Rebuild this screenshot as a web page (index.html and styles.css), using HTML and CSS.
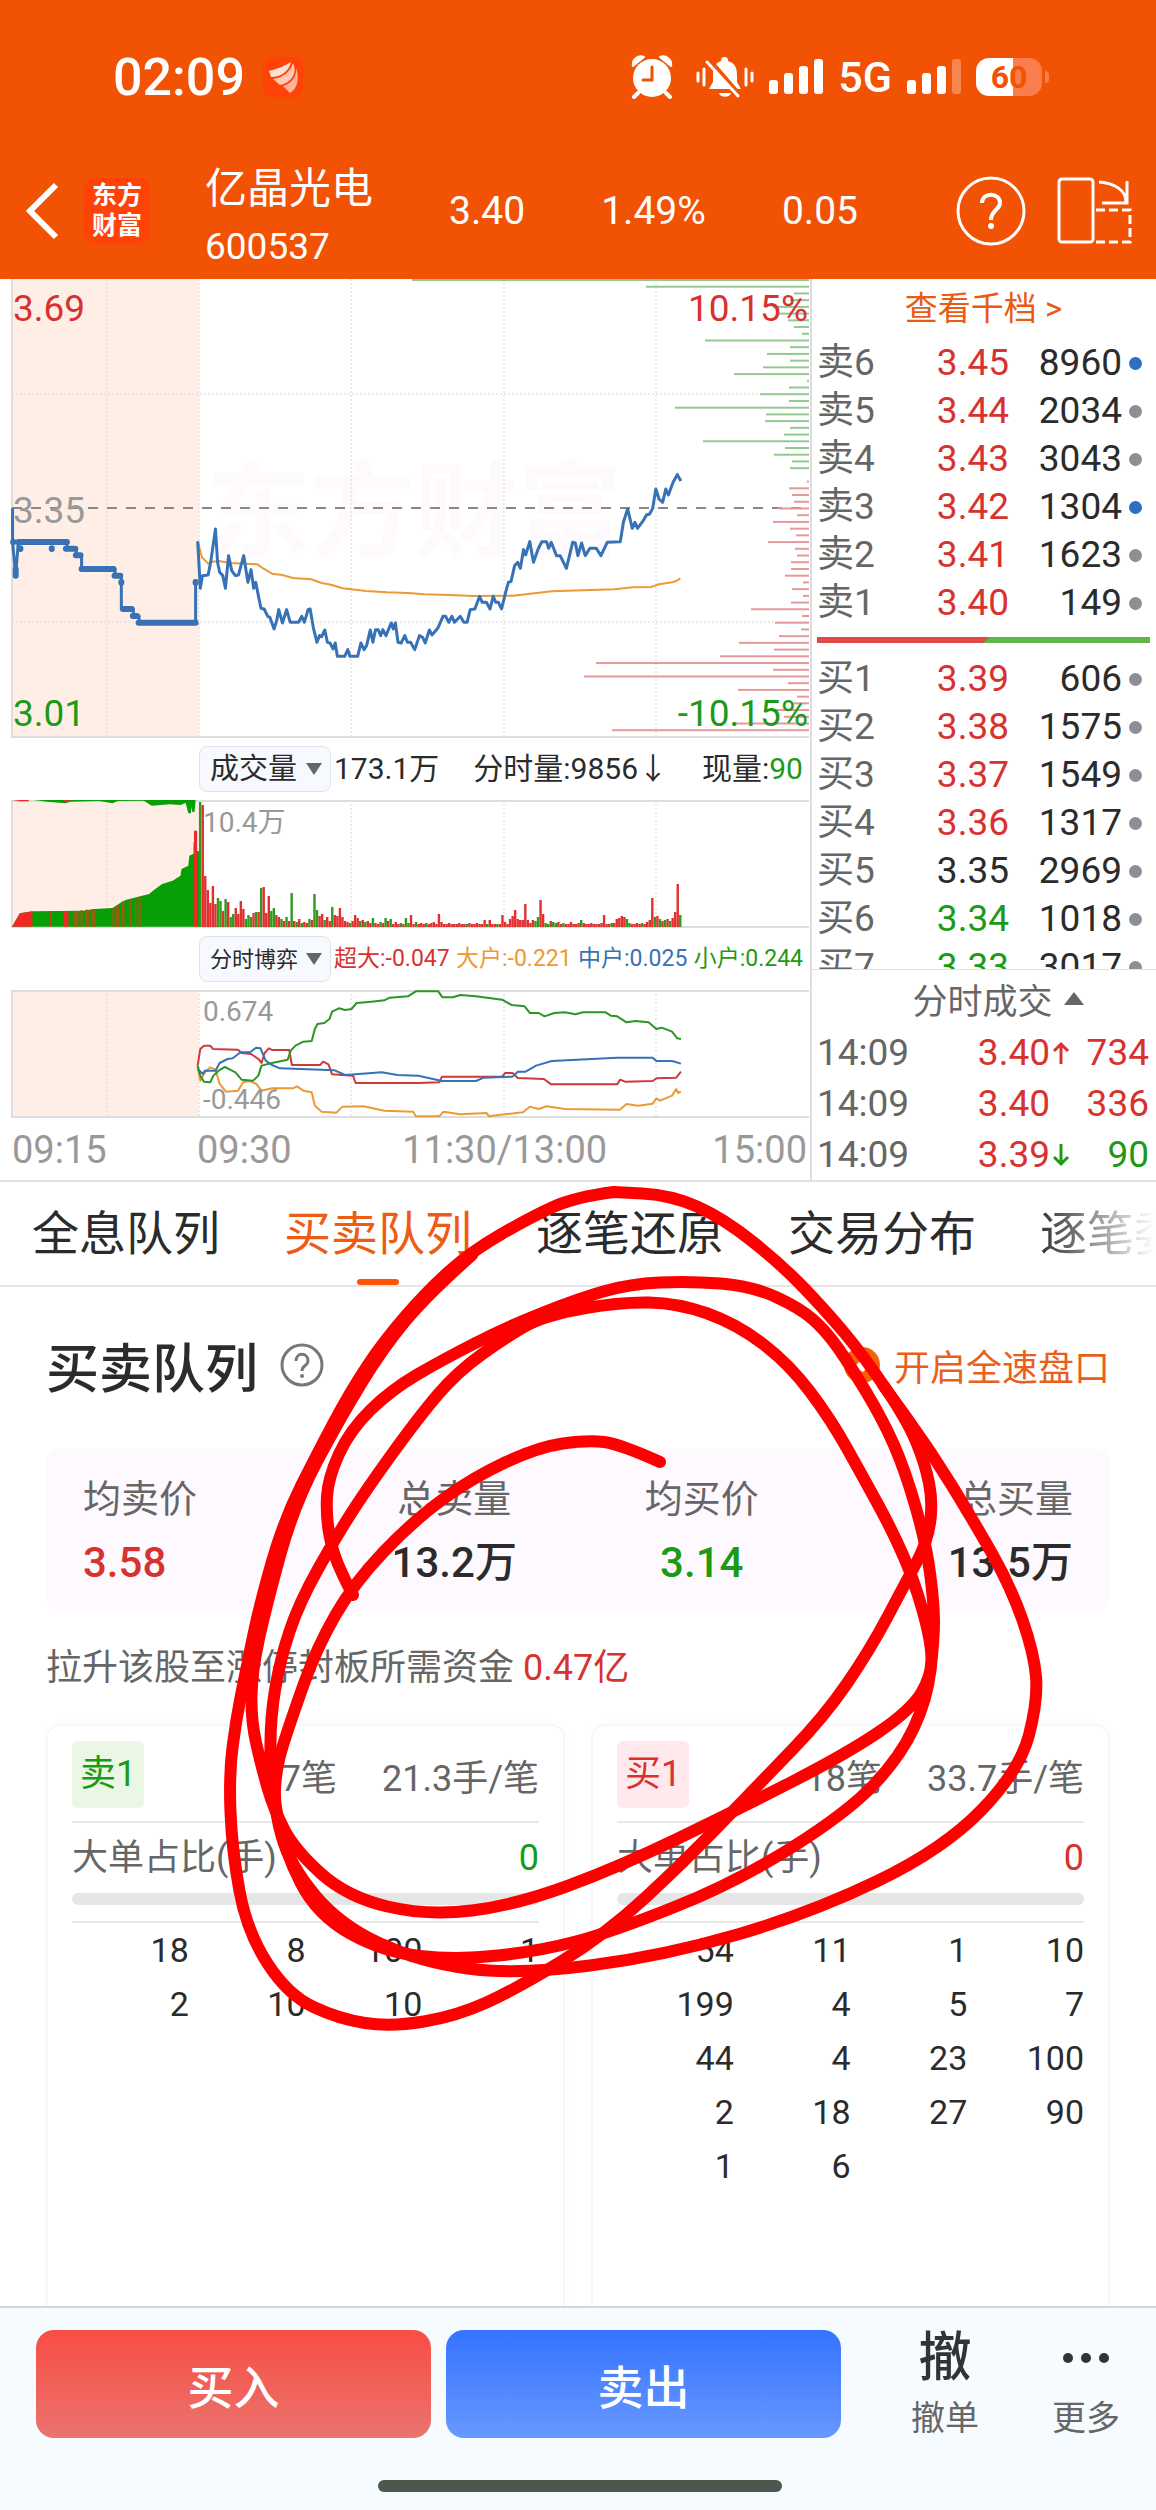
FILE: index.html
```html
<!DOCTYPE html>
<html lang="zh-CN">
<head>
    <meta charset="UTF-8">
    <meta name="viewport" content="width=device-width, initial-scale=1.0">
    <title>亿晶光电 600537</title>
    <link rel="stylesheet" href="styles.css">
</head>
<body>
    <div class="app">
        <header class="header">
            <div class="status">
                <span class="clock">02:09</span>
                <svg class="app-icon" width="40" height="40" viewBox="0 0 40 40">
                    <rect width="40" height="40" rx="9" fill="#ff4208"/>
                    <path d="M6 14C14 12 22 9 28 5C26 14 18 20 8 20Z" fill="#ffe0d2"/>
                    <path d="M10 22C20 21 28 14 30 6C35 16 28 26 17 28Z" fill="#ffc9b4"/>
                    <path d="M20 29C30 26 34 18 33 11C37 22 34 32 27 36Z" fill="#ffb39a"/>
                </svg>
                <div class="status-icons">
                    <svg width="42" height="44" viewBox="0 0 42 44">
                        <circle cx="21" cy="23" r="19" fill="#fff"/>
                        <path d="M2 11A8 8 0 0 1 13 2ZM40 11A8 8 0 0 0 29 2Z" fill="#fff" stroke="#fff" stroke-width="2" stroke-linejoin="round"/>
                        <path d="M7 38L3 42M35 38L39 42" stroke="#fff" stroke-width="4" stroke-linecap="round"/>
                        <path d="M21 12V25H12" fill="none" stroke="#f25204" stroke-width="3" stroke-linecap="round"/>
                    </svg>
                    <svg class="bell" width="58" height="44" viewBox="0 0 58 44">
                        <path d="M28 2C31 2 32 3 32 6C39 8 41 13 41 20V27L45 34H13L17 27V20C17 13 19 8 25 6C25 3 26 2 28 2Z" fill="#fff"/>
                        <path d="M23 38H35C34 43 24 43 23 38Z" fill="#fff"/>
                        <path d="M14 6L45 42" stroke="#f25204" stroke-width="5"/>
                        <path d="M11 7L42 41" stroke="#fff" stroke-width="3" stroke-linecap="round"/>
                        <path d="M2 18V26M8 14V30M50 14V30M56 18V26" stroke="#fff" stroke-width="3" stroke-linecap="round"/>
                    </svg>
                    <svg width="54" height="38" viewBox="0 0 54 38" fill="#fff">
                        <rect y="22" width="9" height="14" rx="3"/>
                        <rect x="15" y="15" width="9" height="21" rx="3"/>
                        <rect x="30" y="8" width="9" height="28" rx="3"/>
                        <rect x="45" y="1" width="9" height="35" rx="3"/>
                    </svg>
                    <span class="network">5G</span>
                    <svg width="54" height="38" viewBox="0 0 54 38" fill="#fff">
                        <rect y="22" width="9" height="14" rx="3"/>
                        <rect x="15" y="15" width="9" height="21" rx="3"/>
                        <rect x="30" y="8" width="9" height="28" rx="3"/>
                        <rect x="45" y="1" width="9" height="35" rx="3" opacity=".3"/>
                    </svg>
                    <span class="battery">60</span>
                </div>
            </div>
            <div class="stock">
                <button class="icon-button" aria-label="返回">
                    <svg width="36" height="60" viewBox="0 0 36 60"><path d="M32 4L6 30L32 56" fill="none" stroke="#fff" stroke-width="6"/></svg>
                </button>
                <span class="logo">东方<br>财富</span>
                <div class="stock-name">
                    <h1>亿晶光电</h1>
                    <span>600537</span>
                </div>
                <div class="quote">
                    <span>3.40</span>
                    <span>1.49%</span>
                    <span>0.05</span>
                </div>
                <button class="icon-button" aria-label="帮助">
                    <svg width="70" height="70" viewBox="0 0 70 70" fill="none" stroke="#fff" stroke-width="3">
                        <circle cx="35" cy="35" r="33"/>
                        <path d="M26 27C26 16 44 16 44 27C44 34 35 34 35 44" stroke-width="4"/>
                        <circle cx="35" cy="50" r="3" fill="#fff" stroke="none"/>
                    </svg>
                </button>
                <button class="icon-button" aria-label="横屏">
                    <svg width="76" height="70" viewBox="0 0 76 70" fill="none" stroke="#fff" stroke-width="3">
                        <rect x="3" y="3" width="34" height="63" rx="3"/>
                        <path d="M43 6C58 7 70 14 70 26M46 27H71V5"/>
                        <path d="M40 34H74V66H40" stroke-dasharray="9 4"/>
                    </svg>
                </button>
            </div>
        </header>

        <main>
            <section class="market">
                <div class="charts">
                    <svg class="chart" viewBox="0 0 810 459">
                        <rect x="12" y="0" width="187" height="458" fill="#ffeee6"/>
                        <text class="watermark" x="206" y="270">东方财富</text>
                        <path class="grid" d="M107 0V458M199 0V458M351 0V458M504 0V458M656 0V458M12 115H809M12 343H809"/>
                        <path class="frame" d="M12 0V458H809"/>
                        <path class="middle" d="M12 229H809"/>
                        <g id="profile"></g>
                        <g class="plot" transform="translate(0 -10) scale(.523 .3333)">
                            <path class="orange" d="M378 817L386 865 398 884 407 878 418 876 440 882 492 886 505 900 520 914 540 918 560 927 595 931 615 942 635 948 655 958 700 966 740 970 780 972 810 976 860 978 905 981 980 980 1010 975 1055 967 1130 963 1175 961 1210 955 1245 954 1260 946 1285 940 1293 936 1301 928"/>
                            <path class="blue" d="M24 718V819L30 920 35 819H128L128 839H146V859H156V900H220V920H232V1020H255V1041H266V1061H374V940"/>
                            <path class="auction" d="M25 819H26M30 900V920M35 819H128M39 838V840M99 838V840M126 839H144M145 859H154M156 900H217M219 920H230M232 939V941M235 1020H252M254 1041H262M265 1061H374M374 939V941"/>
                            <path class="blue" d="M378 817L383 958 387 920 398 918 403 878 412 780 416 880 420 910 426 920 431 958 437 860 443 905 450 920 456 918 466 860 470 900 474 940 480 902 485 958 489 940 494 980 499 1018 505 1020 512 1042 516 1045 524 1080 529 1055 533 1022 540 1062 548 1022 555 1060 571 1060 577 1042 582 1060 589 1022 593 1020 599 1075 606 1120 611 1100 615 1103 621 1083 626 1120 631 1122 637 1140 641 1122 645 1162 659 1162 665 1142 669 1162 684 1162 690 1122 696 1142 701 1130 708 1083 713 1120 718 1082 723 1082 728 1100 732 1082 738 1100 748 1062 752 1080 756 1062 761 1120 767 1122 774 1100 779 1120 785 1120 793 1142 802 1100 808 1105 813 1122 821 1083 826 1098 837 1078 847 1042 852 1042 858 1060 864 1042 869 1060 880 1042 887 1060 893 1060 899 1022 908 1020 917 982 922 1000 930 1000 937 1020 943 982 948 1000 953 1000 959 1020 966 975 972 940 977 938 984 890 990 880 995 898 1001 842 1005 858 1013 818 1020 880 1029 840 1036 818 1045 818 1049 838 1054 820 1064 860 1071 860 1083 898 1095 820 1100 822 1105 860 1112 822 1119 860 1128 838 1140 838 1149 860 1161 820 1186 818 1192 760 1200 720 1209 778 1214 760 1219 778 1230 755 1236 738 1242 735 1248 718 1254 660 1260 690 1267 700 1273 660 1278 678 1287 640 1295 617 1302 636"/>
                        </g>
                        <text class="axis up" x="13" y="42">3.69</text>
                        <text class="axis up end" x="808" y="42">10.15%</text>
                        <text class="axis muted" x="13" y="244">3.35</text>
                        <text class="axis down" x="13" y="447">3.01</text>
                        <text class="axis down end" x="808" y="447">-10.15%</text>
                    </svg>

                    <div class="indicator">
                        <label class="picker">
                            <select class="picker-select" aria-label="副图指标一">
                                <option>成交量</option>
                            </select>
                        </label>
                        <div class="volume-values">
                            <span>173.1万</span>
                            <span>分时量:9856↓</span>
                            <span>现量:<b class="down">90</b></span>
                        </div>
                    </div>

                    <svg class="chart" viewBox="0 0 810 128">
                        <rect x="12" y="0" width="187" height="127" fill="#ffeee6"/>
                        <path class="grid" d="M107 0V127M199 0V127M351 0V127M504 0V127M656 0V127"/>
                        <path class="frame" d="M809 1H12V127H809"/>
                        <g transform="translate(0 -71) scale(.523 .3333)">
                            <path fill="#06a006" d="M23 593L38 553 62 547 160 545 180 540 215 537 232 520 240 513 285 495 295 482 310 465 330 455 345 440 347 420 360 410 362 380 370 374 370 340 375 340 375 366 383 366V593ZM65 213L90 218 125 223 135 218 190 216 215 223 225 216 275 215 290 230 325 226 345 228 355 222 360 253 365 253 366 235 368 250 372 248 374 213Z"/>
                            <path fill="#f02828" d="M23 593L38 553 62 547V593ZM96 547H99V593H96ZM122 546H131V593H122ZM371 305H377V593H371ZM23 213H55V217H40ZM122 213H133V218H124Z"/>
                            <path fill="#a05a10" d="M140 546H150V593H140ZM154 544H158V593H154ZM163 542H170V593H163ZM174 541H183V593H174ZM215 537H219V593H215ZM222 532H228V593H222ZM232 518H238V593H232ZM247 510H251V593H247ZM258 506H261V593H258ZM265 503H269V593H265Z"/>
                        </g>
                        <g id="volume"></g>
                        <text class="axis-small" x="203" y="32">10.4万</text>
                    </svg>

                    <div class="indicator">
                        <label class="picker">
                            <select class="picker-select picker-small" aria-label="副图指标二">
                                <option>分时博弈</option>
                            </select>
                        </label>
                        <div class="game-values">
                            <span class="up">超大:-0.047</span>
                            <span class="large">大户:-0.221</span>
                            <span class="medium">中户:0.025</span>
                            <span class="down">小户:0.244</span>
                        </div>
                    </div>

                    <svg class="chart" viewBox="0 0 810 128">
                        <rect x="12" y="0" width="187" height="127" fill="#ffeee6"/>
                        <path class="grid" d="M107 0V127M199 0V127M351 0V127M504 0V127M656 0V127"/>
                        <path class="frame" d="M809 1H12V127H809"/>
                        <text class="axis-small" x="203" y="31">0.674</text>
                        <g class="plot thin" transform="translate(0 -61) scale(.523 .3333)">
                            <path class="orange" d="M378 415L383 455 392 430 402 415 412 422 420 465 432 488 455 485 465 460 478 456 490 465 500 485 520 478 560 478 568 472 580 485 596 490 602 530 615 548 643 551 655 533 695 532 735 545 790 548 795 562 840 562 848 548 880 556 930 552 935 562 965 556 1000 550 1013 533 1030 540 1045 532 1080 540 1185 542 1198 525 1220 530 1248 524 1255 508 1262 515 1285 500 1293 480 1297 492 1302 488"/>
                            <path class="red" d="M378 410L383 360 390 350 402 350 407 360 455 362 462 372 480 375 494 390 500 402 506 372 514 358 520 363 553 363 558 408 612 408 618 398 628 406 635 436 675 440 680 462 800 462 840 460 845 443 960 443 966 432 980 432 990 447 1040 450 1054 466 1180 466 1186 452 1195 458 1248 456 1255 448 1293 446 1302 428"/>
                            <path class="blue" d="M378 420L388 435 392 425 412 425 420 402 435 390 445 388 460 370 478 370 490 356 498 358 508 395 520 408 535 418 640 424 660 438 680 436 730 430 760 438 800 440 845 456 910 456 925 446 980 443 990 428 1005 428 1025 410 1055 396 1180 386 1248 386 1255 396 1285 396 1302 404"/>
                            <path class="green" d="M378 410L383 440 390 458 402 460 408 440 418 425 430 414 440 422 450 430 462 452 484 455 494 440 500 410 520 402 550 392 556 365 565 350 580 338 596 336 602 300 607 285 620 282 630 270 635 248 648 238 660 243 672 240 682 222 710 218 735 214 745 206 780 202 795 187 838 187 846 205 866 205 880 198 910 202 960 212 978 228 1003 232 1013 252 1030 252 1041 262 1060 252 1080 250 1100 256 1115 250 1158 250 1168 260 1180 262 1198 280 1215 276 1240 280 1255 300 1265 296 1285 308 1295 328 1302 330"/>
                        </g>
                        <text class="axis-small" x="203" y="119">-0.446</text>
                    </svg>

                    <div class="times">
                        <span>09:15</span>
                        <span>09:30</span>
                        <span>11:30/13:00</span>
                        <span>15:00</span>
                    </div>
                </div>

                <aside class="side">
                    <div class="book">
                        <a class="depth-link" href="#">查看千档 &gt;</a>
                        <table class="levels">
                            <tr><th>卖6</th><td class="up">3.45</td><td>8960</td><td><i class="dot big"></i></td></tr>
                            <tr><th>卖5</th><td class="up">3.44</td><td>2034</td><td><i class="dot"></i></td></tr>
                            <tr><th>卖4</th><td class="up">3.43</td><td>3043</td><td><i class="dot"></i></td></tr>
                            <tr><th>卖3</th><td class="up">3.42</td><td>1304</td><td><i class="dot big"></i></td></tr>
                            <tr><th>卖2</th><td class="up">3.41</td><td>1623</td><td><i class="dot"></i></td></tr>
                            <tr><th>卖1</th><td class="up">3.40</td><td>149</td><td><i class="dot"></i></td></tr>
                        </table>
                        <div class="ratio"></div>
                        <table class="levels">
                            <tr><th>买1</th><td class="up">3.39</td><td>606</td><td><i class="dot"></i></td></tr>
                            <tr><th>买2</th><td class="up">3.38</td><td>1575</td><td><i class="dot"></i></td></tr>
                            <tr><th>买3</th><td class="up">3.37</td><td>1549</td><td><i class="dot"></i></td></tr>
                            <tr><th>买4</th><td class="up">3.36</td><td>1317</td><td><i class="dot"></i></td></tr>
                            <tr><th>买5</th><td>3.35</td><td>2969</td><td><i class="dot"></i></td></tr>
                            <tr><th>买6</th><td class="down">3.34</td><td>1018</td><td><i class="dot"></i></td></tr>
                            <tr><th>买7</th><td class="down">3.33</td><td>3017</td><td><i class="dot"></i></td></tr>
                        </table>
                    </div>
                    <button class="trades-title">分时成交 <svg width="22" height="15" viewBox="0 0 22 15"><path d="M11 1L21 14H1Z" fill="#666"/></svg></button>
                    <table class="trades">
                        <tr><th>14:09</th><td class="up">3.40</td><td class="arrow up"><svg width="18" height="24" viewBox="0 0 18 24"><path d="M9 23V3M2 10L9 3L16 10"/></svg></td><td class="up">734</td></tr>
                        <tr><th>14:09</th><td class="up">3.40</td><td class="arrow"></td><td class="up">336</td></tr>
                        <tr><th>14:09</th><td class="up">3.39</td><td class="arrow down"><svg width="18" height="24" viewBox="0 0 18 24"><path d="M9 1V21M2 14L9 21L16 14"/></svg></td><td class="down">90</td></tr>
                    </table>
                </aside>
            </section>

            <nav class="tabs">
                <a href="#">全息队列</a>
                <a href="#" class="active">买卖队列</a>
                <a href="#">逐笔还原</a>
                <a href="#">交易分布</a>
                <a href="#">逐笔委托</a>
            </nav>

            <section class="queue">
                <div class="queue-head">
                    <h2>买卖队列</h2>
                    <button class="icon-button" aria-label="说明">
                        <svg width="44" height="44" viewBox="0 0 44 44" fill="none" stroke="#777" stroke-width="3">
                            <circle cx="22" cy="22" r="20"/>
                            <path d="M16 18C16 9 28 9 28 18C28 23 22 22 22 28"/>
                            <circle cx="22" cy="33" r="2" fill="#777" stroke="none"/>
                        </svg>
                    </button>
                    <a class="speed-link" href="#">
                        <svg width="36" height="36" viewBox="0 0 36 36">
                            <circle cx="18" cy="18" r="18" fill="#f5600a"/>
                            <path d="M10 20L20 10H27V17L19 25Z" fill="#fff"/>
                        </svg>
                        开启全速盘口
                    </a>
                </div>

                <div class="summary">
                    <div><span>均卖价</span><strong class="up">3.58</strong></div>
                    <div><span>总卖量</span><strong>13.2万</strong></div>
                    <div><span>均买价</span><strong class="down">3.14</strong></div>
                    <div><span>总买量</span><strong>13.5万</strong></div>
                </div>

                <p class="funds">拉升该股至涨停封板所需资金 <span class="up">0.47亿</span></p>

                <div class="cards">
                    <div class="card">
                        <div class="card-head">
                            <span class="badge sell">卖1</span>
                            <span class="count">7笔</span>
                            <span>21.3手/笔</span>
                        </div>
                        <div class="big-orders"><span>大单占比(手)</span><span class="down">0</span></div>
                        <div class="meter"></div>
                        <div class="orders">
                            <span>18</span><span>8</span><span>100</span><span>1</span>
                            <span>2</span><span>10</span><span>10</span>
                        </div>
                    </div>
                    <div class="card">
                        <div class="card-head">
                            <span class="badge buy">买1</span>
                            <span class="count">18笔</span>
                            <span>33.7手/笔</span>
                        </div>
                        <div class="big-orders"><span>大单占比(手)</span><span class="up">0</span></div>
                        <div class="meter"></div>
                        <div class="orders">
                            <span>54</span><span>11</span><span>1</span><span>10</span>
                            <span>199</span><span>4</span><span>5</span><span>7</span>
                            <span>44</span><span>4</span><span>23</span><span>100</span>
                            <span>2</span><span>18</span><span>27</span><span>90</span>
                            <span>1</span><span>6</span>
                        </div>
                    </div>
                </div>
            </section>
        </main>

        <footer class="footer">
            <div class="actions">
                <button class="trade buy-button">买入</button>
                <button class="trade sell-button">卖出</button>
                <button class="action"><span class="action-icon">撤</span>撤单</button>
                <button class="action"><span class="action-icon"><svg width="46" height="10" viewBox="0 0 46 10" fill="#333"><circle cx="5" cy="5" r="5"/><circle cx="23" cy="5" r="5"/><circle cx="41" cy="5" r="5"/></svg></span>更多</button>
            </div>
            <div class="home-bar"></div>
        </footer>

        <svg class="marker" id="marker" viewBox="0 0 1156 2510"></svg>
    </div>

    <script src="script.js"></script>
</body>
</html>
```
FILE: styles.css
```css
* {
    box-sizing: border-box;
}
body {
    margin: 0;
    font-family: Roboto, "Noto Sans CJK SC", sans-serif;
    font-size: 36px;
    color: #2b2b2b;
    background: #fff;
}
h1, h2, p {
    margin: 0;
    font-weight: 400;
}
a {
    color: inherit;
    text-decoration: none;
}
button {
    padding: 0;
    border: none;
    background: none;
    font-family: inherit;
    color: inherit;
    cursor: pointer;
}
svg {
    display: block;
}
table {
    width: 100%;
    border-collapse: collapse;
}
th, td {
    padding: 0;
    font-weight: 400;
    text-align: right;
}
th {
    text-align: left;
    color: #666;
}
.up {
    color: #d8322f;
    fill: #d8322f;
}
.down {
    color: #1c9a16;
    fill: #1c9a16;
}
.large {
    color: #eb9a35;
}
.medium {
    color: #3672b5;
}
.app {
    position: relative;
    display: flex;
    flex-direction: column;
    height: 100vh;
    overflow: hidden;
}

/* header */
.header {
    background: #f25204;
    color: #fff;
    padding-bottom: 27px;
}
.status {
    display: flex;
    align-items: center;
    height: 154px;
    padding: 0 114px 0 113px;
}
.clock {
    font-size: 52px;
    font-weight: 500;
}
.app-icon {
    margin-left: 18px;
}
.status-icons {
    display: flex;
    align-items: center;
    gap: 15px;
    margin-left: auto;
}
.bell {
    margin-left: 8px;
}
.network {
    font-size: 43px;
    font-weight: 500;
}
.battery {
    position: relative;
    width: 66px;
    height: 38px;
    line-height: 38px;
    border-radius: 13px;
    font-size: 32px;
    font-weight: 700;
    text-align: center;
    color: #f25204;
    background: linear-gradient(90deg, #fff 56%, #f97e4b 56%);
}
.battery::after {
    content: "";
    position: absolute;
    right: -7px;
    top: 13px;
    width: 4px;
    height: 12px;
    border-radius: 0 4px 4px 0;
    background: #f97e4b;
}
.stock {
    display: flex;
    align-items: center;
    height: 98px;
    padding: 16px 24px 0;
}
.logo {
    width: 66px;
    height: 66px;
    margin: 0 55px 0 24px;
    padding-top: 3px;
    border-radius: 12px;
    background: #ff4208;
    font-size: 25px;
    line-height: 30px;
    font-weight: 700;
    text-align: center;
}
.stock-name {
    display: flex;
    flex-direction: column;
    padding-top: 14px;
    font-size: 37px;
    line-height: 58px;
}
.stock-name h1 {
    font-size: 42px;
    line-height: 58px;
}
.quote {
    flex: 1;
    display: flex;
    justify-content: space-between;
    padding: 0 98px 0 76px;
    font-size: 39px;
}
.icon-button + .icon-button {
    margin-left: 30px;
}

/* charts */
.market {
    display: grid;
    grid-template-columns: 810fr 346fr;
    border-bottom: 2px solid #e2e2e2;
}
.chart {
    width: 100%;
}
.grid {
    fill: none;
    stroke: #d5d5dc;
    stroke-dasharray: 2 2;
}
.frame {
    fill: none;
    stroke: #ddd;
    stroke-width: 2;
}
.middle {
    stroke: #888;
    stroke-width: 2;
    stroke-dasharray: 10 9;
}
.watermark {
    font-size: 104px;
    font-weight: 700;
    fill: #fdf9fd;
}
.plot path {
    fill: none;
    stroke-width: 3;
    stroke-linejoin: round;
    vector-effect: non-scaling-stroke;
}
.thin path {
    stroke-width: 2;
}
.plot .blue {
    stroke: #3672b5;
}
.plot .orange {
    stroke: #eb9a35;
    stroke-width: 2;
}
.plot .red {
    stroke: #d0393a;
}
.plot .green {
    stroke: #2d9426;
}
.plot .auction {
    stroke: #3672b5;
    stroke-width: 6;
    stroke-linecap: round;
}
.axis {
    font-size: 37px;
}
.axis-small {
    font-size: 28px;
    fill: #999;
}
.muted {
    fill: #999;
}
.end {
    text-anchor: end;
}
.indicator {
    display: flex;
    align-items: center;
    height: 62px;
    padding: 0 7px 0 199px;
}
.picker {
    position: relative;
    flex: none;
    width: 132px;
}
.picker::after {
    content: "";
    position: absolute;
    right: 9px;
    top: 17px;
    border: 8px solid transparent;
    border-top: 12px solid #666;
    border-bottom: none;
    pointer-events: none;
}
.picker-select {
    appearance: none;
    display: block;
    width: 100%;
    height: 46px;
    padding: 0 0 0 10px;
    border: 1px solid #dfe3ee;
    border-radius: 8px;
    background: #f6faff;
    color: #2b2b2b;
    font-family: inherit;
    font-size: 29px;
}
.picker-small {
    font-size: 22px;
}
.volume-values, .game-values {
    flex: 1;
    display: flex;
    justify-content: space-between;
    padding-left: 3px;
    font-size: 30px;
    line-height: 46px;
    white-space: nowrap;
}
.game-values {
    font-size: 23px;
}
.volume-values b {
    font-weight: 400;
}
.times {
    display: grid;
    grid-template-columns: 185px 146px 1fr auto;
    height: 62px;
    padding: 0 3px 0 12px;
    font-size: 38px;
    line-height: 64px;
    color: #999;
}
.times span:nth-child(3) {
    text-align: center;
    padding-right: 46px;
}

/* order book */
.side {
    display: flex;
    flex-direction: column;
    min-width: 0;
    border-left: 2px solid #ddd;
}
.book {
    flex: 1 1 0;
    min-height: 0;
    overflow: hidden;
    padding: 0 6px 0 5px;
    border-bottom: 1px solid #e2e2e2;
}
.depth-link {
    display: block;
    line-height: 60px;
    font-size: 33px;
    text-align: center;
    color: #ea5a12;
}
.levels {
    table-layout: fixed;
    font-size: 37px;
    line-height: 48px;
}
.levels th {
    width: 80px;
}
.levels td:nth-child(2) {
    width: 112px;
}
.levels td:last-child {
    width: 28px;
    padding-left: 7px;
}
.dot {
    display: block;
    width: 13px;
    height: 13px;
    border-radius: 50%;
    background: #8d8e96;
}
.big {
    background: #2f6fc0;
}
.ratio {
    height: 6px;
    margin: 10px 0 12px;
    background: linear-gradient(135deg, #e14b48 51%, #62b54a 51%);
}
.trades-title {
    display: flex;
    justify-content: center;
    align-items: center;
    gap: 10px;
    height: 57px;
    padding-left: 29px;
    font-size: 35px;
    color: #666;
}
.trades {
    font-size: 37px;
    line-height: 51px;
}
.trades th {
    width: 120px;
    padding-left: 5px;
}
.trades td:last-child {
    width: 84px;
    padding-right: 7px;
}
.trades .arrow {
    width: 22px;
}
.arrow svg {
    margin: 0 auto;
    fill: none;
    stroke: currentColor;
    stroke-width: 3;
}

/* tabs */
.tabs {
    display: flex;
    gap: 64px;
    height: 105px;
    padding-left: 32px;
    overflow: hidden;
    border-bottom: 2px solid #e6e6e6;
    font-size: 47px;
    line-height: 103px;
    white-space: nowrap;
}
.tabs .active {
    position: relative;
    color: #ee5b14;
}
.tabs .active::after {
    content: "";
    position: absolute;
    left: 50%;
    bottom: 0;
    width: 42px;
    height: 6px;
    margin-left: -21px;
    border-radius: 3px;
    background: #fb5607;
}
.tabs a:last-child {
    color: transparent;
    background: linear-gradient(90deg, #333, #fff 114px);
    background-clip: text;
}

/* queue */
.queue {
    padding: 44px 46px 0;
}
.queue-head {
    display: flex;
    align-items: center;
    gap: 22px;
    height: 68px;
}
.queue-head h2 {
    font-size: 53px;
    font-weight: 500;
}
.speed-link {
    display: flex;
    align-items: center;
    gap: 14px;
    margin-left: auto;
    color: #e8601c;
}
.summary {
    display: grid;
    grid-template-columns: repeat(4, 1fr);
    height: 164px;
    margin-top: 49px;
    padding: 19px 37px;
    border-radius: 16px;
    background: #fdf9fe;
}
.summary div {
    display: flex;
    flex-direction: column;
    align-items: center;
    font-size: 38px;
    line-height: 64px;
    color: #666;
}
.summary div:first-child {
    align-items: flex-start;
}
.summary div:last-child {
    align-items: flex-end;
}
.summary strong {
    font-size: 42px;
    font-weight: 500;
    color: #2b2b2b;
}
.summary strong.up {
    color: #d8322f;
}
.summary strong.down {
    color: #1c9a16;
}
.funds {
    line-height: 112px;
    color: #666;
}
.cards {
    display: grid;
    grid-template-columns: 1fr 1fr;
    gap: 26px;
}
.card {
    height: 620px;
    padding: 15px 24px 0;
    border: 2px solid #f9f6fa;
    border-radius: 14px;
    box-shadow: 0 0 8px #fdf9fe;
    color: #666;
}
.card-head {
    display: flex;
    align-items: center;
    gap: 45px;
    padding-bottom: 13px;
    border-bottom: 2px solid #e8e8e8;
}
.count {
    margin-left: auto;
}
.badge {
    width: 72px;
    border-radius: 6px;
    line-height: 67px;
    text-align: center;
}
.sell {
    color: #1c9a16;
    background: #e9f7e4;
}
.buy {
    color: #d8322f;
    background: #ffe9ed;
}
.big-orders {
    display: flex;
    justify-content: space-between;
    line-height: 70px;
}
.meter {
    height: 12px;
    border-radius: 6px;
    background: #e6e6e6;
}
.orders {
    display: grid;
    grid-template-columns: repeat(4, 1fr);
    margin-top: 16px;
    border-top: 2px solid #e8e8e8;
    color: #2b2b2b;
    font-size: 34px;
    line-height: 54px;
    text-align: right;
}

/* footer */
main {
    flex: 1 1 0;
    min-height: 0;
    overflow: hidden;
}
.footer {
    height: 204px;
    padding: 22px 33px 0 36px;
    border-top: 2px solid #d0d5de;
    background: #f6fbff;
}
.actions {
    display: grid;
    grid-template-columns: 395fr 395fr 178fr 74fr;
    align-items: start;
    gap: 15px;
}
.trade {
    height: 108px;
    border-radius: 18px;
    font-size: 46px;
    font-weight: 500;
    color: #fff;
}
.buy-button {
    background: linear-gradient(#f84d44, #ea746e);
}
.sell-button {
    background: linear-gradient(#3474ff, #6898ff);
}
.action {
    display: flex;
    flex-direction: column;
    align-items: center;
    height: 120px;
    font-size: 34px;
    line-height: 64px;
    white-space: nowrap;
    color: #666;
}
.action-icon {
    flex: none;
    display: flex;
    align-items: center;
    height: 56px;
    font-size: 53px;
    font-weight: 500;
    color: #333;
}
.home-bar {
    width: 404px;
    max-width: 50%;
    height: 12px;
    margin: 30px auto 0;
    border-radius: 6px;
    background: #4d574e;
}

/* hand drawn marker over the page */
.marker {
    position: absolute;
    left: 0;
    top: 0;
    width: 100%;
    pointer-events: none;
}
.marker path {
    fill: none;
    stroke: #f00;
    stroke-width: 12;
    stroke-linecap: round;
    stroke-linejoin: round;
}
```
FILE: script.js
```js
const SVG = 'http://www.w3.org/2000/svg';

function add(parent, tag, attrs) {
    const el = document.createElementNS(SVG, tag);
    for (const key in attrs) el.setAttribute(key, attrs[key]);
    parent.appendChild(el);
}

// volume at each price, top to bottom; bars grow from the right edge
const profile = [397, 163, 15, 19, 36, 30, 21, 15, 7, 104, 19, 42, 19, 46, 75, 2, 20, 49, 20, 134, 43, 44, 19, 25, 106, 24, 35, 17, 19, 0,
    2, 20, 17, 15, 31, 12, 36, 19, 13, 41, 14, 12, 18, 18, 24, 6, 17, 6, 18, 58, 7, 34, 8, 30, 70, 35, 89, 213, 36, 225, 21, 71, 12, 15, 36, 25, 77, 197];
profile.forEach((w, i) => {
    add(document.getElementById('profile'), 'rect', {
        x: 809 - w, y: i * 6.72, width: w, height: 2, fill: i < 30 ? '#93c990' : '#e5999b'
    });
});

// volume per minute, negative = green
const volume = [-125, 122, 51, 37, 24, 41, 23, -29, -26, 16, -28, 25, -10, -13, 19, 13, 26, 18, -8, -12, -10, 14, -15, 15, -39, 40, 14, 31, -16, -19,
    12, 10, -8, 6, -10, 6, -34, 6, -5, 8, -4, 5, 4, -8, 7, -33, -17, 11, 13, -7, 10, 6, -20, 12, 11, 19, 10, 6, 5, -4,
    6, 12, 9, -6, 7, -5, 6, 4, -9, 4, 3, -5, 4, -9, 6, -8, 3, 5, 3, -4, 3, -9, -4, 12, 3, -5, 3, 4, 3, -4,
    3, 4, 5, 3, 13, 5, 3, 3, 4, 3, 3, 3, 4, 3, 3, -3, 4, 3, 3, 4, 3, 3, 7, -3, 7, 3, 3, -3, 3, 12,
    5, 3, 8, 11, 17, 8, 7, 7, 23, 7, 4, 7, -6, -10, 27, 13, -4, -3, 6, -5, -4, 5, 3, -4, 3, 3, 5, 3, 3, 4,
    -7, 4, 3, 3, 4, 3, 3, 3, 4, 12, 3, 3, -4, 4, 8, 9, 11, 10, -8, -4, 3, 3, 4, 3, -4, 3, 5, 7, 29, -10,
    11, -8, 6, -7, 8, -6, 9, 15, 43, -12];
volume.forEach((v, i) => {
    const h = Math.abs(v);
    add(document.getElementById('volume'), 'rect', {
        x: 199 + i * 2.54, y: 127 - h, width: 2.4, height: h, fill: v < 0 ? '#2f9a1e' : '#e23030'
    });
});

// marker strokes, smoothed through the midpoints
const strokes = [
    [[614, 1192], [575, 1197], [531, 1217], [472, 1251], [428, 1290], [383, 1342], [350, 1392], [318, 1452], [284, 1520], [260, 1603], [246, 1670], [236, 1720], [229, 1775], [232, 1850], [247, 1932], [288, 1995], [339, 2019], [391, 2027], [457, 2016], [516, 1989], [605, 1935], [686, 1860], [760, 1783], [824, 1717], [870, 1650], [907, 1580], [927, 1543], [933, 1503], [925, 1463], [907, 1420], [863, 1355], [826, 1311], [782, 1265], [723, 1218], [671, 1195], [614, 1192]],
    [[472, 1255], [428, 1294], [383, 1348], [340, 1418], [294, 1505], [267, 1603], [252, 1670], [251, 1720], [261, 1765], [274, 1810], [295, 1850], [347, 1897], [428, 1916], [516, 1905], [619, 1867], [737, 1810], [848, 1753], [911, 1710], [932, 1675], [931, 1640], [914, 1580], [892, 1530], [863, 1477], [830, 1418], [789, 1364], [737, 1324], [678, 1303], [620, 1302], [546, 1315], [509, 1335], [457, 1372], [418, 1418], [366, 1490], [336, 1537], [299, 1603], [280, 1660], [270, 1720], [271, 1783], [284, 1850], [317, 1915], [383, 1952], [457, 1960], [540, 1951], [612, 1932], [737, 1882], [848, 1812], [900, 1757], [927, 1700], [934, 1640], [934, 1603], [926, 1543], [905, 1470], [883, 1420], [850, 1365], [826, 1331], [800, 1308], [752, 1286], [689, 1281], [630, 1284], [580, 1298], [509, 1326], [442, 1360], [391, 1390], [350, 1430], [328, 1478], [326, 1515], [332, 1550], [344, 1578], [353, 1595]],
    [[660, 1462], [620, 1444], [588, 1440], [538, 1447], [472, 1478], [413, 1521], [354, 1583], [317, 1647], [291, 1720], [276, 1767], [274, 1810], [290, 1865], [340, 1925], [420, 1962], [516, 1975], [664, 1956], [811, 1913], [944, 1849], [1020, 1770], [1038, 1700], [1034, 1653], [1011, 1587], [973, 1520], [930, 1450], [883, 1385]]
];
strokes.forEach(points => {
    let d = `M${points[0]}`;
    for (let i = 1; i < points.length - 1; i++) {
        const [x, y] = points[i];
        const [nx, ny] = points[i + 1];
        d += `Q${x} ${y} ${(x + nx) / 2} ${(y + ny) / 2}`;
    }
    d += `L${points[points.length - 1]}`;
    add(document.getElementById('marker'), 'path', { d });
});
```
